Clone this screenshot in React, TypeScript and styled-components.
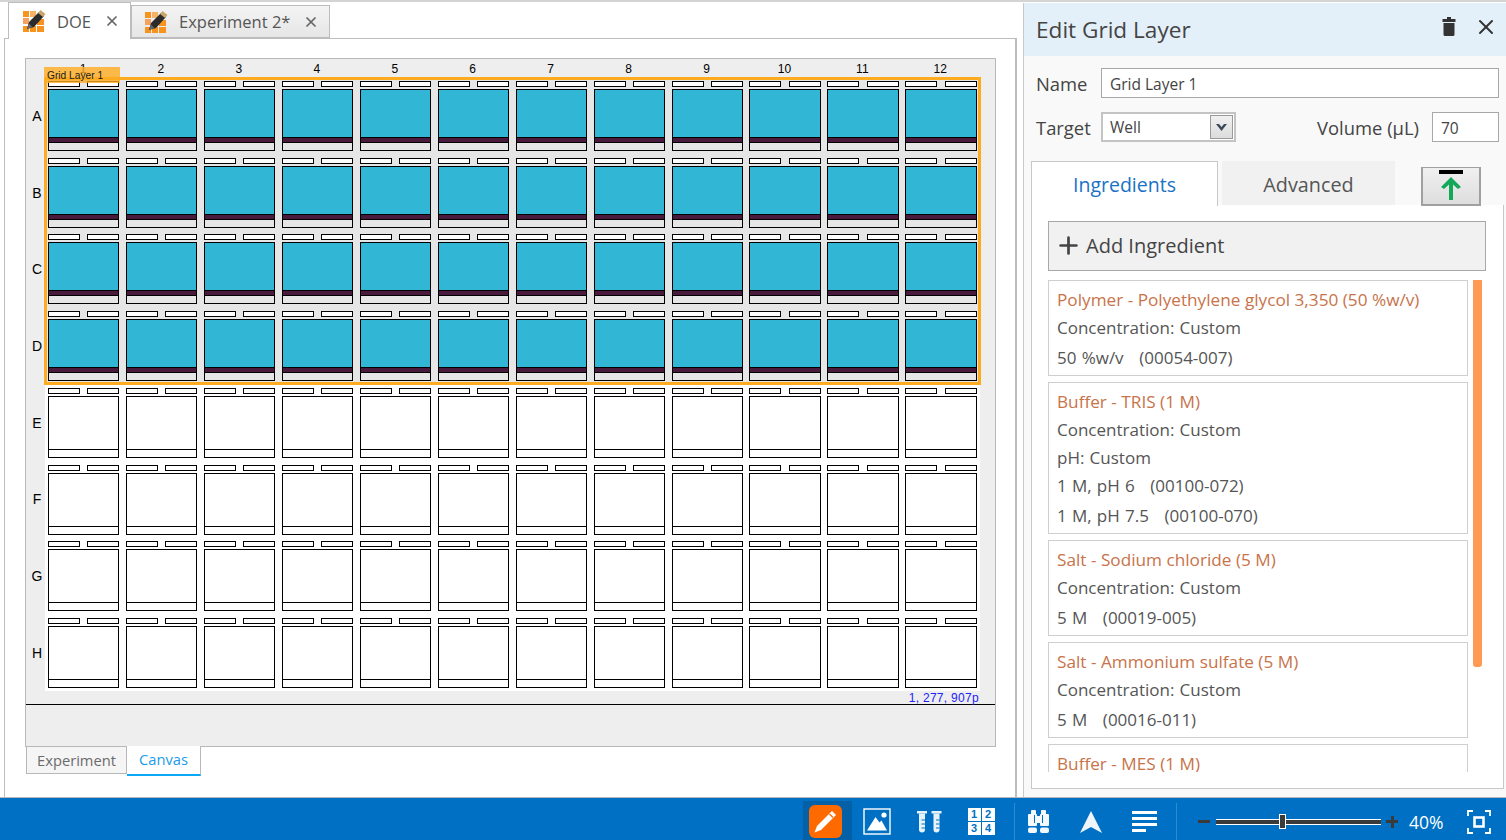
import React from 'react';
import styled, { createGlobalStyle } from 'styled-components';
import { X, Plus } from 'lucide-react';

const UI_FONT = '"Open Sans", "Noto Sans", sans-serif';
const PLATE_FONT = '"Liberation Sans", Arial, sans-serif';

const GlobalStyle = createGlobalStyle`
  html, body {
    margin: 0;
    padding: 0;
    background: #fff;
    overflow: hidden;
  }
  * { box-sizing: border-box; }
`;

const Shell = styled.div`
  width: 1506px;
  height: 840px;
  display: flex;
  flex-direction: column;
  font-family: ${UI_FONT};
  color: #444;
  background: #fff;
`;

const Workspace = styled.div`
  flex: none;
  height: 798px;
  display: flex;
  border-top: 2px solid #d4d4d4;
  border-bottom: 1px solid #b8b8b8;
`;

const DocumentPane = styled.div`
  width: 1021px;
  display: flex;
  flex-direction: column;
`;

const TabStrip = styled.div`
  height: 36px;
  display: flex;
  align-items: flex-end;
  padding-left: 8px;
`;

const DocTab = styled.div<{ $active?: boolean }>`
  height: ${p => (p.$active ? 37 : 33)}px;
  display: flex;
  align-items: center;
  gap: 11px;
  padding: 0 0 0 ${p => (p.$active ? 13 : 12)}px;
  margin-bottom: ${p => (p.$active ? -1 : 0)}px;
  width: ${p => (p.$active ? 123 : 199)}px;
  background: ${p => (p.$active ? '#fff' : 'linear-gradient(#f4f4f4, #e6e6e6)')};
  border: 1px solid #bdbdbd;
  border-bottom: ${p => (p.$active ? 'none' : '1px solid #bdbdbd')};
  font-size: 16.5px;
  color: #555;
  position: relative;
  z-index: ${p => (p.$active ? 2 : 1)};
`;

const TabClose = styled(X)`
  color: #666;
  flex: none;
  margin-left: 2px;
`;

const DocBody = styled.div`
  flex: 1;
  margin-left: 4px;
  margin-right: 4px;
  padding: 19px 20px 0 20px;
  border: 1px solid #bdbdbd;
  border-bottom: none;
  border-right-width: 2px;
  background: #fff;
  display: flex;
  flex-direction: column;
`;

const CanvasFrame = styled.div`
  width: 971px;
  height: 689px;
  flex: none;
  background: #eee;
  border: 1px solid #b8b8b8;
  display: flex;
  flex-direction: column;
`;

const CanvasTable = styled.div`
  display: grid;
  grid-template-columns: 19px 935px;
  grid-template-rows: 19px 613px;
`;

const ColumnHeader = styled.div`
  grid-column: 2;
  display: grid;
  grid-template-columns: repeat(12, 77.95px);
  margin-left: -1px;
  font: 12px ${PLATE_FONT};
  color: #000;
`;

const ColumnLabel = styled.span`
  text-align: center;
  line-height: 20px;
`;

const RowHeader = styled.div`
  display: grid;
  grid-auto-rows: 76.72px;
  padding-top: 3px;
  font: 14px ${PLATE_FONT};
  color: #000;
`;

const RowLabel = styled.span`
  display: flex;
  align-items: center;
  justify-content: center;
  padding: 0 2px 7px 5px;
`;

const Plate = styled.div`
  position: relative;
  background: #fff;
  padding: 3px;
`;

const Selection = styled.div`
  position: absolute;
  left: -1px;
  top: -1px;
  width: 937px;
  height: 308px;
  background: #e6e6e6;
  border: 3px solid #ffab20;
`;

const SelectionTag = styled.div`
  position: absolute;
  left: -1px;
  top: -11px;
  width: 76px;
  height: 16px;
  padding-left: 3px;
  background: rgba(255, 171, 32, 0.8);
  font: 10.2px/18px ${PLATE_FONT};
  color: #1b1b1b;
  z-index: 2;
`;

const WellGrid = styled.div`
  position: relative;
  z-index: 1;
  display: grid;
  grid-template-columns: repeat(12, 77.95px);
  grid-auto-rows: 76.72px;
`;

const Well = styled.div`
  width: 71.3px;
  display: flex;
  flex-direction: column;
  gap: 2px;
`;

const WellTabs = styled.div`
  height: 6px;
  display: flex;
  justify-content: space-between;
`;

const WellTab = styled.div`
  height: 6px;
  width: 32px;
  background: #fff;
  border: 1px solid #000;
`;

const WellBody = styled.div`
  height: 62px;
  display: flex;
  flex-direction: column;
  border: 1px solid #000;
  background: #fff;
`;

const WellLiquid = styled.div<{ $filled: boolean }>`
  flex: 1;
  background: ${p => (p.$filled ? '#31b6d6' : '#fff')};
`;

const WellBand = styled.div`
  height: 6px;
  background: #4a1a3c;
  border-top: 1px solid #000;
  border-bottom: 1px solid #000;
`;

const WellBase = styled.div<{ $filled: boolean }>`
  height: ${p => (p.$filled ? 7 : 8)}px;
  background: ${p => (p.$filled ? '#e6e6e6' : '#fff')};
  border-top: ${p => (p.$filled ? 'none' : '1px solid #000')};
`;

const PixelReadout = styled.div`
  height: 14px;
  padding-right: 16px;
  border-bottom: 1px solid #000;
  text-align: right;
  font: 12px/15px ${PLATE_FONT};
  letter-spacing: 0.3px;
  color: #2222ff;
`;

const BottomTabs = styled.div`
  display: flex;
  padding-left: 1px;
  margin-top: -1px;
  position: relative;
`;

const BottomTab = styled.div<{ $active?: boolean }>`
  height: ${p => (p.$active ? 30 : 28)}px;
  width: ${p => (p.$active ? 74 : 101)}px;
  text-align: center;
  font-size: 14.7px;
  line-height: 26px;
  background: ${p => (p.$active ? '#fff' : '#f5f5f5')};
  color: ${p => (p.$active ? '#1c9ce8' : '#6b6b6b')};
  border: 1px solid #b8b8b8;
  border-top: ${p => (p.$active ? 'none' : '1px solid #b8b8b8')};
  border-bottom: ${p => (p.$active ? '2px solid #0aa8f5' : '1px solid #b8b8b8')};
  border-left: ${p => (p.$active ? 'none' : '1px solid #b8b8b8')};
`;

const EditPanel = styled.div`
  width: 483px;
  margin-top: 1px;
  margin-left: 2px;
  padding-bottom: 8px;
  border-left: 1px solid #c8c8c8;
  background: #f9f9f9;
  display: flex;
  flex-direction: column;
`;

const PanelHeader = styled.div`
  height: 53px;
  flex: none;
  display: flex;
  align-items: center;
  padding: 0 8px 0 12px;
  background: #e4f0f9;
`;

const PanelTitle = styled.div`
  flex: 1;
  font-size: 22.6px;
  color: #444;
`;

const HeaderActions = styled.div`
  display: flex;
  align-items: center;
  gap: 18px;
  padding-bottom: 6px;
  color: #333;
`;

const FieldRow = styled.div<{ $top: number }>`
  display: flex;
  align-items: center;
  margin-top: ${p => p.$top}px;
  padding: 0 7px 0 12px;
  font-size: 18.4px;
  color: #444;
`;

const FieldLabel = styled.span`
  width: 65px;
  flex: none;
`;

const TextField = styled.div<{ $width: number }>`
  width: ${p => p.$width}px;
  height: 30px;
  padding-left: 8px;
  border: 1px solid #a8a8a8;
  background: #fff;
  font-size: 15.5px;
  line-height: 30px;
`;

const SelectField = styled.div`
  width: 135px;
  height: 30px;
  padding-left: 7px;
  display: flex;
  align-items: center;
  justify-content: space-between;
  border: 2px solid #c4c4c4;
  background: #fff;
  font-size: 15.5px;
`;

const SelectArrow = styled.div`
  width: 23px;
  height: 24px;
  margin-right: 1px;
  display: flex;
  align-items: center;
  justify-content: center;
  border: 1px solid #9a9a9a;
  background: linear-gradient(#f0f0f0, #dcdcdc);
`;

const VolumeLabel = styled.span`
  margin-left: auto;
  margin-right: 13px;
`;

const TabsRow = styled.div`
  height: 44px;
  margin-top: 19px;
  padding-left: 7px;
  display: flex;
  align-items: stretch;
  position: relative;
`;

const PanelTab = styled.div<{ $active?: boolean }>`
  width: ${p => (p.$active ? 187 : 173)}px;
  margin-right: ${p => (p.$active ? 4 : 0)}px;
  text-align: center;
  font-size: ${p => (p.$active ? 19.5 : 19.8)}px;
  line-height: ${p => (p.$active ? 45 : 47)}px;
  background: ${p => (p.$active ? '#fff' : '#f1f1f1')};
  color: ${p => (p.$active ? '#1a72c4' : '#555')};
  border: ${p => (p.$active ? '1px solid #c8c8c8' : 'none')};
  border-bottom: none;
  position: relative;
  z-index: 2;
  margin-bottom: ${p => (p.$active ? -1 : 0)}px;
`;

const UploadButton = styled.div`
  position: absolute;
  left: 397px;
  top: 6px;
  width: 60px;
  height: 39px;
  z-index: 3;
  display: flex;
  align-items: center;
  justify-content: center;
  border: 1px solid #a0a0a0;
  border-bottom-width: 2px;
  border-left-width: 2px;
  border-right-width: 2px;
  background: linear-gradient(#f0f0f0, #dedede);
`;

const IngredientPane = styled.div`
  flex: 1;
  margin-left: 7px;
  margin-right: 2px;
  padding: 16px 17px 0 16px;
  background: #fff;
  border: 1px solid #c8c8c8;
  border-top: none;
  display: flex;
  flex-direction: column;
  position: relative;
  min-height: 0;
`;

const AddButton = styled.div`
  height: 50px;
  width: 438px;
  flex: none;
  display: flex;
  align-items: center;
  gap: 4px;
  padding: 0 0 1px 6px;
  background: #f1f1f1;
  border: 1px solid #a8a8a8;
  font-size: 20px;
  color: #444;
`;

const AddIcon = styled(Plus)`
  flex: none;
`;

const CardList = styled.div`
  height: 492px;
  margin-top: 9px;
  display: flex;
  flex-direction: column;
  gap: 6px;
  overflow: hidden;
`;

const Card = styled.div`
  width: 420px;
  flex: none;
  padding: 7px 8px 3px 8px;
  border: 1px solid #cfcfcf;
`;

const CardTitle = styled.div`
  font-size: 17.2px;
  line-height: 24px;
  margin-bottom: 2px;
  color: #c8734a;
`;

const CardLine = styled.div<{ $gapped?: boolean }>`
  font-size: 17px;
  line-height: 28px;
  margin-top: ${p => (p.$gapped ? 2 : 0)}px;
  color: #555;
  word-spacing: 0.8px;
  white-space: pre;
`;

const ScrollThumb = styled.div`
  position: absolute;
  left: 441px;
  top: 75px;
  width: 9px;
  height: 387px;
  background: #ff9a55;
  border-radius: 0 0 3px 3px;
`;

const StatusBar = styled.div`
  flex: 1;
  display: flex;
  align-items: flex-end;
  justify-content: flex-end;
  background: #0070c4;
  color: #fff;
  padding-right: 15px;
`;

const StatusGroup = styled.div<{ $gap: number; $left: number; $right: number }>`
  height: 37px;
  display: flex;
  align-items: flex-end;
  gap: ${p => p.$gap}px;
  padding: 0 ${p => p.$right}px 0 ${p => p.$left}px;
  border-right: 1px solid #2b8bd3;
`;

const StatusSlot = styled.div<{ $active?: boolean }>`
  width: ${p => (p.$active ? 49 : 44)}px;
  height: ${p => (p.$active ? 39 : 37)}px;
  padding-right: ${p => (p.$active ? 5 : 0)}px;
  margin-right: ${p => (p.$active ? -5 : 0)}px;
  padding-top: ${p => (p.$active ? 2 : 0)}px;
  display: flex;
  align-items: center;
  justify-content: center;
  background: ${p => (p.$active ? '#0461a8' : 'transparent')};
`;

const PencilTile = styled.div`
  width: 33px;
  height: 33px;
  border-radius: 6px;
  background: #ff6a00;
  display: flex;
  align-items: center;
  justify-content: center;
`;

const NumberTiles = styled.div`
  display: grid;
  grid-template-columns: 13px 13px;
  grid-auto-rows: 13px;
  gap: 1px;
`;

const NumberTile = styled.span`
  background: #fff;
  color: #0070c4;
  font: bold 11px/13px ${PLATE_FONT};
  text-align: center;
`;

const ZoomGroup = styled.div`
  height: 37px;
  display: flex;
  align-items: center;
  padding-left: 21px;
`;

const ZoomSign = styled.div<{ $plus?: boolean }>`
  position: relative;
  width: 12px;
  height: 3px;
  background: #3a3a3a;
  &::after {
    content: '';
    display: ${p => (p.$plus ? 'block' : 'none')};
    position: absolute;
    left: 4.5px;
    top: -4.5px;
    width: 3px;
    height: 12px;
    background: #3a3a3a;
  }
`;

const ZoomTrack = styled.div`
  position: relative;
  width: 165px;
  height: 6px;
  margin: 0 5px 0 6px;
  background: #3a3a3a;
  border-top: 1px solid #fff;
  border-bottom: 1px solid #fff;
`;

const ZoomThumb = styled.div`
  position: absolute;
  left: 63px;
  top: -6px;
  width: 7px;
  height: 15px;
  background: #3a3a3a;
  border: 1px solid #fff;
`;

const ZoomValue = styled.span`
  margin-left: 11px;
  width: 58px;
  font-size: 17.5px;
`;

const rows = ['A', 'B', 'C', 'D', 'E', 'F', 'G', 'H'];
const columns = Array.from({ length: 12 }, (_, i) => i + 1);
const filledRows = ['A', 'B', 'C', 'D'];

const ingredients = [
  {
    title: 'Polymer - Polyethylene glycol 3,350 (50 %w/v)',
    lines: [{ text: 'Concentration: Custom' }, { text: '50 %w/v   (00054-007)', gapped: true }],
  },
  {
    title: 'Buffer - TRIS (1 M)',
    lines: [
      { text: 'Concentration: Custom' },
      { text: 'pH: Custom' },
      { text: '1 M, pH 6   (00100-072)' },
      { text: '1 M, pH 7.5   (00100-070)', gapped: true },
    ],
  },
  {
    title: 'Salt - Sodium chloride (5 M)',
    lines: [{ text: 'Concentration: Custom' }, { text: '5 M   (00019-005)', gapped: true }],
  },
  {
    title: 'Salt - Ammonium sulfate (5 M)',
    lines: [{ text: 'Concentration: Custom' }, { text: '5 M   (00016-011)', gapped: true }],
  },
  {
    title: 'Buffer - MES (1 M)',
    lines: [],
  },
];

const AppIcon = () => (
  <svg width="24" height="24" viewBox="0 0 24 24">
    <g fill="#f7941d">
      <rect x="1" y="2" width="6" height="6" />
      <rect x="8" y="2" width="6" height="6" fill="#f9b264" />
      <rect x="1" y="9" width="6" height="6" fill="#f4a261" />
      <rect x="15" y="10" width="7" height="6" />
      <rect x="1" y="17" width="6" height="6" />
      <rect x="8" y="17" width="6" height="6" />
      <rect x="15" y="17" width="7" height="6" />
    </g>
    <path d="M5 20 L7 13 L17 3 L22 7 L12 18 Z" fill="#2b2b2b" />
    <path d="M16 4 L18.5 1 L23.5 5 L21 8 Z" fill="#c9a66b" />
    <path d="M5 20 L7 14.5 L10.5 18 Z" fill="#666" />
  </svg>
);

const TrashGlyph = () => (
  <svg width="14" height="19" viewBox="0 0 14 19">
    <path d="M5 0 H9 V2 H13.5 V5 H0.5 V2 H5 Z" fill="#333" />
    <path d="M1.5 6 H12.5 V17.5 A1.5 1.5 0 0 1 11 19 H3 A1.5 1.5 0 0 1 1.5 17.5 Z" fill="#333" />
  </svg>
);

const ChevronGlyph = () => (
  <svg width="13" height="11" viewBox="0 0 13 11">
    <path d="M1 2 L6.5 9 L12 2 L9 2 L6.5 5 L4 2 Z" fill="#3d4a5c" />
  </svg>
);

const UploadGlyph = () => (
  <svg width="26" height="32" viewBox="0 0 26 32">
    <rect x="1" y="0" width="24" height="4" fill="#000" />
    <path d="M13 7 L23 17 L20 19 L15 14.5 L15 30 L11 30 L11 14.5 L6 19 L3 17 Z" fill="#12a85a" />
  </svg>
);

const PencilGlyph = () => (
  <svg width="26" height="26" viewBox="0 0 26 26">
    <path d="M20 2 L24 6 L9 21 L2.5 23.5 L5 17 Z" fill="#fff" />
    <path d="M17.5 5 L21 8.5" stroke="#ff6a00" strokeWidth="1.2" />
  </svg>
);

const PictureGlyph = () => (
  <svg width="28" height="27" viewBox="0 0 28 27" fill="none">
    <rect x="1" y="1" width="26" height="25" stroke="#fff" strokeWidth="1.4" />
    <path d="M4 22.5 L12.5 9 L16.5 14.5 L18.5 12.5 L24 22.5 Z" fill="#fff" />
    <circle cx="21" cy="7" r="2.6" fill="#fff" />
  </svg>
);

const TubesGlyph = () => (
  <svg width="25" height="22" viewBox="0 0 25 22">
    <g fill="#e8f2fa">
      <rect x="0" y="0" width="10" height="2.5" />
      <rect x="14.5" y="0" width="10" height="2.5" />
      <path d="M2 2.5 H8 V18.5 A3 3 0 0 1 2 18.5 Z" />
      <path d="M16.5 2.5 H22.5 V18.5 A3 3 0 0 1 16.5 18.5 Z" />
    </g>
    <path d="M4.5 9 H8 M4.5 13 H8 M4.5 17 H8 M19 9 H22.5 M19 13 H22.5 M19 17 H22.5" stroke="#0070c4" strokeWidth="1" />
  </svg>
);

const BinocularsGlyph = () => (
  <svg width="23" height="23" viewBox="0 0 23 23">
    <g fill="#f4f9fd">
      <rect x="4" y="0" width="5" height="5" rx="1" />
      <rect x="14" y="0" width="5" height="5" rx="1" />
      <rect x="1" y="4" width="9" height="12" rx="1" />
      <rect x="13" y="4" width="9" height="12" rx="1" />
      <rect x="10" y="6" width="3" height="7" />
      <rect x="1" y="17.5" width="9" height="5.5" rx="2" />
      <rect x="13" y="17.5" width="9" height="5.5" rx="2" />
    </g>
    <path d="M7.5 5 V13 M15.5 5 V13" stroke="#0070c4" strokeWidth="1" />
  </svg>
);

const NavGlyph = () => (
  <svg width="22" height="22" viewBox="0 0 22 22">
    <path d="M11 0 L22 22 L11 16 L0 22 Z" fill="#eef5fb" />
  </svg>
);

const ListGlyph = () => (
  <svg width="25" height="21" viewBox="0 0 25 21">
    <g fill="#fff">
      <rect x="0" y="0" width="25" height="3" />
      <rect x="0" y="6" width="25" height="3" />
      <rect x="0" y="12" width="25" height="3" />
      <rect x="0" y="18" width="14" height="3" />
    </g>
  </svg>
);

const FitGlyph = () => (
  <svg width="24" height="24" viewBox="0 0 24 24" fill="none" stroke="#fff" strokeWidth="1.8">
    <path d="M1 6 V1 H6 M18 1 H23 V6 M1 18 V23 H6 M18 23 H23 V18" />
    <rect x="7.5" y="7.5" width="9" height="9" strokeWidth="2.6" />
  </svg>
);

export default function App() {
  return (
    <Shell>
      <GlobalStyle />
      <Workspace>
        <DocumentPane>
          <TabStrip>
            <DocTab $active>
              <AppIcon />
              <span>DOE</span>
              <TabClose size={16} strokeWidth={2.6} />
            </DocTab>
            <DocTab>
              <AppIcon />
              <span>Experiment 2*</span>
              <TabClose size={16} strokeWidth={2.6} />
            </DocTab>
          </TabStrip>
          <DocBody>
            <CanvasFrame>
              <CanvasTable>
                <ColumnHeader>
                  {columns.map(c => (
                    <ColumnLabel key={c}>{c}</ColumnLabel>
                  ))}
                </ColumnHeader>
                <RowHeader>
                  {rows.map(r => (
                    <RowLabel key={r}>{r}</RowLabel>
                  ))}
                </RowHeader>
                <Plate>
                  <Selection />
                  <SelectionTag>Grid Layer 1</SelectionTag>
                  <WellGrid>
                    {rows.map(r =>
                      columns.map(c => {
                        const filled = filledRows.includes(r);
                        return (
                          <Well key={r + c}>
                            <WellTabs>
                              <WellTab />
                              <WellTab />
                            </WellTabs>
                            <WellBody>
                              <WellLiquid $filled={filled} />
                              {filled && <WellBand />}
                              <WellBase $filled={filled} />
                            </WellBody>
                          </Well>
                        );
                      })
                    )}
                  </WellGrid>
                </Plate>
              </CanvasTable>
              <PixelReadout>1, 277, 907p</PixelReadout>
            </CanvasFrame>
            <BottomTabs>
              <BottomTab>Experiment</BottomTab>
              <BottomTab $active>Canvas</BottomTab>
            </BottomTabs>
          </DocBody>
        </DocumentPane>
        <EditPanel>
          <PanelHeader>
            <PanelTitle>Edit Grid Layer</PanelTitle>
            <HeaderActions>
              <TrashGlyph />
              <X size={24} strokeWidth={2} />
            </HeaderActions>
          </PanelHeader>
          <FieldRow $top={12}>
            <FieldLabel>Name</FieldLabel>
            <TextField $width={398}>Grid Layer 1</TextField>
          </FieldRow>
          <FieldRow $top={14}>
            <FieldLabel>Target</FieldLabel>
            <SelectField>
              Well
              <SelectArrow>
                <ChevronGlyph />
              </SelectArrow>
            </SelectField>
            <VolumeLabel>Volume (µL)</VolumeLabel>
            <TextField $width={67}>70</TextField>
          </FieldRow>
          <TabsRow>
            <PanelTab $active>Ingredients</PanelTab>
            <PanelTab>Advanced</PanelTab>
            <UploadButton>
              <UploadGlyph />
            </UploadButton>
          </TabsRow>
          <IngredientPane>
            <AddButton>
              <AddIcon size={27} strokeWidth={2.4} />
              Add Ingredient
            </AddButton>
            <CardList>
              {ingredients.map(item => (
                <Card key={item.title}>
                  <CardTitle>{item.title}</CardTitle>
                  {item.lines.map(line => (
                    <CardLine key={line.text} $gapped={line.gapped}>
                      {line.text}
                    </CardLine>
                  ))}
                </Card>
              ))}
            </CardList>
            <ScrollThumb />
          </IngredientPane>
        </EditPanel>
      </Workspace>
      <StatusBar>
        <StatusGroup $gap={8} $left={0} $right={11}>
          <StatusSlot $active>
            <PencilTile>
              <PencilGlyph />
            </PencilTile>
          </StatusSlot>
          <StatusSlot>
            <PictureGlyph />
          </StatusSlot>
          <StatusSlot>
            <TubesGlyph />
          </StatusSlot>
          <StatusSlot>
            <NumberTiles>
              <NumberTile>1</NumberTile>
              <NumberTile>2</NumberTile>
              <NumberTile>3</NumberTile>
              <NumberTile>4</NumberTile>
            </NumberTiles>
          </StatusSlot>
        </StatusGroup>
        <StatusGroup $gap={9} $left={1} $right={10}>
          <StatusSlot>
            <BinocularsGlyph />
          </StatusSlot>
          <StatusSlot>
            <NavGlyph />
          </StatusSlot>
          <StatusSlot>
            <ListGlyph />
          </StatusSlot>
        </StatusGroup>
        <ZoomGroup>
          <ZoomSign />
          <ZoomTrack>
            <ZoomThumb />
          </ZoomTrack>
          <ZoomSign $plus />
          <ZoomValue>40%</ZoomValue>
          <FitGlyph />
        </ZoomGroup>
      </StatusBar>
    </Shell>
  );
}
